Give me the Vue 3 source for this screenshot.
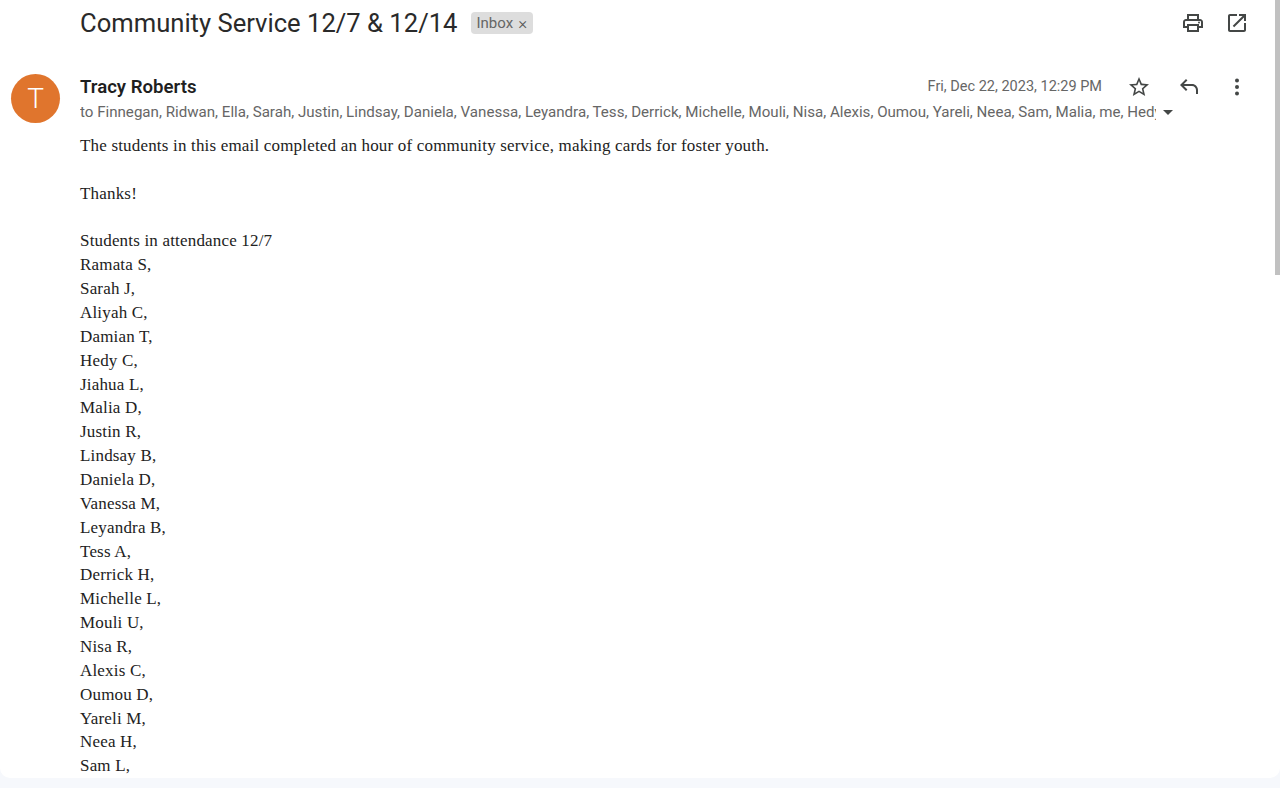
<script setup>
const students = ['Ramata S,','Sarah J,','Aliyah C,','Damian T,','Hedy C,','Jiahua L,','Malia D,','Justin R,','Lindsay B,','Daniela D,','Vanessa M,','Leyandra B,','Tess A,','Derrick H,','Michelle L,','Mouli U,','Nisa R,','Alexis C,','Oumou D,','Yareli M,','Neea H,','Sam L,']
const recipients = 'to Finnegan, Ridwan, Ella, Sarah, Justin, Lindsay, Daniela, Vanessa, Leyandra, Tess, Derrick, Michelle, Mouli, Nisa, Alexis, Oumou, Yareli, Neea, Sam, Malia, me, Hedy C'
</script>

<template>
  <div class="page">
    <div class="sheet">
      <main class="mail">
        <header class="subject-row">
          <h1 class="subject">Community Service 12/7 &amp; 12/14</h1>
          <span class="chip">Inbox<span class="chip-x">×</span></span>
          <div class="top-actions">
            <svg class="icon" viewBox="0 0 24 24" width="24" height="24"><path fill="#444746" d="M19 8h-1V3H6v5H5c-1.66 0-3 1.34-3 3v6h4v4h12v-4h4v-6c0-1.66-1.34-3-3-3zM8 5h8v3H8V5zm8 14H8v-4h8v4zm2-4v-2H6v2H4v-4c0-.55.45-1 1-1h14c.55 0 1 .45 1 1v4h-2z"/><circle cx="18" cy="11.5" r="1" fill="#444746"/></svg>
            <svg class="icon" viewBox="0 0 24 24" width="24" height="24"><path fill="#444746" d="M19 19H5V5h7V3H5c-1.11 0-2 .9-2 2v14c0 1.1.89 2 2 2h14c1.1 0 2-.9 2-2v-7h-2v7zM14 3v2h3.59l-9.83 9.83 1.41 1.41L19 6.41V10h2V3h-7z"/></svg>
          </div>
        </header>

        <section class="message">
          <div class="avatar">T</div>
          <div class="content">
            <div class="meta">
              <div class="sender-row">
                <span class="sender">Tracy Roberts</span>
                <span class="date">Fri, Dec 22, 2023, 12:29 PM</span>
                <div class="msg-actions">
                  <svg viewBox="0 0 24 24" width="24" height="24"><path fill="#444746" d="M22 9.24l-7.19-.62L12 2 9.19 8.63 2 9.24l5.46 4.73L5.82 21 12 17.27 18.18 21l-1.63-7.03L22 9.24zM12 15.4l-3.76 2.27 1-4.28-3.32-2.88 4.38-.38L12 6.1l1.71 4.04 4.38.38-3.32 2.88 1 4.28L12 15.4z"/></svg>
                  <svg viewBox="0 0 24 24" width="24" height="24"><path fill="#444746" d="M20 19v-4c0-2.2-1.8-4-4-4H7.83l3.58 3.59L10 16l-6-6 6-6 1.41 1.41L7.83 9H16c3.31 0 6 2.69 6 6v4h-2z"/></svg>
                  <svg viewBox="0 0 24 24" width="24" height="24"><circle cx="12" cy="5.5" r="2" fill="#444746"/><circle cx="12" cy="12" r="2" fill="#444746"/><circle cx="12" cy="18.5" r="2" fill="#444746"/></svg>
                </div>
              </div>
              <div class="to-row">
                <span class="recipients">{{ recipients }}</span>
                <span class="caret"></span>
              </div>
            </div>
            <div class="body">
              <p class="para">The students in this email completed an hour of community service, making cards for foster youth.</p>
              <p class="para">Thanks!</p>
              <p>Students in attendance 12/7</p>
              <p v-for="s in students" :key="s">{{ s }}</p>
            </div>
          </div>
        </section>
      </main>
      <div class="scrollbar"></div>
    </div>
  </div>
</template>

<style>
html, body { margin: 0; background: #f6f8fc; overflow: hidden; }
</style>

<style scoped>
.page {
  height: 788px;
  background: #f6f8fc;
  overflow: hidden;
}
.sheet {
  position: relative;
  height: 778px;
  background: #fff;
  border-radius: 0 0 10px 10px;
  overflow: hidden;
}
.mail {
  display: flex;
  flex-direction: column;
  padding-right: 32px;
}
.subject-row {
  display: flex;
  align-items: center;
  height: 46px;
  padding-left: 80px;
}
.subject {
  margin: 0;
  font: 400 25.6px/46px Roboto, sans-serif;
  color: #2a2a2a;
}
.chip {
  display: flex;
  align-items: center;
  margin-left: 14px;
  padding: 0 6px 0 5px;
  height: 22px;
  border-radius: 4px;
  background: #dddddd;
  color: #666;
  font: 400 15px/22px Roboto, sans-serif;
}
.chip-x { margin-left: 5px; color: #555; font-size: 17px; font-weight: 300; }
.top-actions {
  margin-left: auto;
  display: flex;
  gap: 20px;
  margin-right: -1px;
}
.icon { display: block; }
.message {
  display: flex;
  margin-top: 28px;
  padding-left: 11px;
}
.avatar {
  flex: none;
  width: 49px;
  height: 49px;
  border-radius: 50%;
  background: #e0752d;
  color: #fff;
  font: 300 28px/49px Roboto, sans-serif;
  text-align: center;
}
.content { flex: 1; min-width: 0; margin-left: 20px; }
.sender-row {
  display: flex;
  align-items: center;
  height: 26px;
}
.sender {
  font: 600 18.6px/26px Roboto, sans-serif;
  color: #1f1f1f;
}
.date {
  margin-left: auto;
  font: 400 14.5px/26px Roboto, sans-serif;
  color: #666;
}
.msg-actions {
  display: flex;
  align-items: center;
  gap: 25px;
  margin-left: 25px;
  margin-right: -1px;
}
.to-row {
  display: flex;
  align-items: center;
  height: 24px;
}
.recipients {
  flex: none;
  width: 1076px;
  white-space: nowrap;
  overflow: hidden;
  font: 400 15.11px/24px Roboto, sans-serif;
  color: #666;
}
.caret {
  margin-left: 7px;
  width: 0;
  height: 0;
  border-left: 5px solid transparent;
  border-right: 5px solid transparent;
  border-top: 5px solid #444746;
}
.body {
  margin-top: 10px;
  font: 400 17px/23.86px "Liberation Serif", serif;
  letter-spacing: 0.18px;
  color: #222;
}
.body p { margin: 0; }
.body .para { margin-bottom: 23.86px; }
.scrollbar {
  position: absolute;
  top: 0;
  right: 0;
  width: 5px;
  height: 275px;
  background: #c1c1c1;
}
</style>
